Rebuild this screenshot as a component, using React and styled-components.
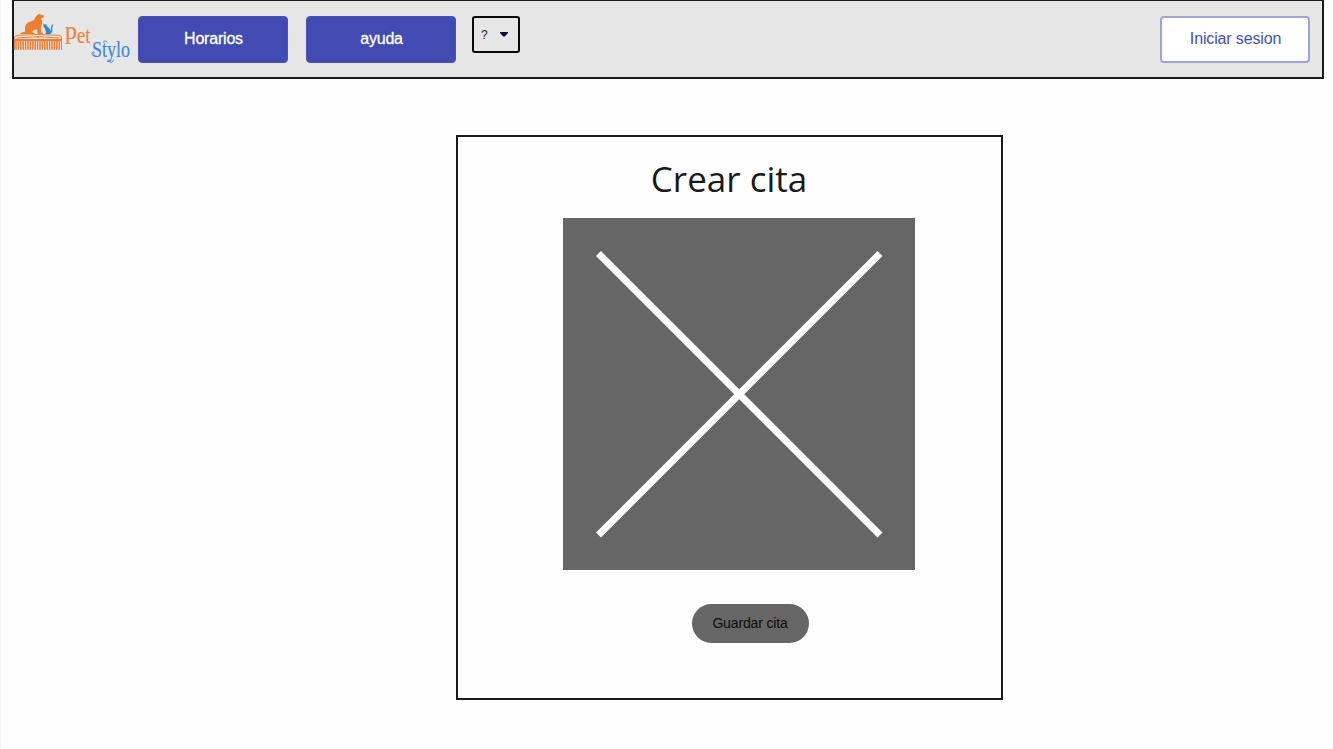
import React from 'react';
import styled, { createGlobalStyle } from 'styled-components';

const GlobalStyle = createGlobalStyle`
  *, *::before, *::after { box-sizing: border-box; }
  body {
    margin: 0;
    background: #fefefe;
    font-family: "Liberation Sans", Arial, sans-serif;
  }
  button { font-family: inherit; margin: 0; padding: 0; cursor: pointer; }
`;

const Page = styled.div`
  display: flex;
  flex-direction: column;
  height: 749px;
  padding: 0 9px 0 11px;
  border-left: 1px solid #f4f4f4;
`;

const Header = styled.header`
  display: flex;
  align-items: flex-start;
  flex: none;
  height: 79px;
  padding: 15px 12px 0 0;
  background: #e6e6e6;
  border: 2px solid #1a1a1a;
  border-top-width: 1px;
`;

const Logo = styled.svg`
  flex: none;
  width: 120px;
  height: 64px;
  margin: -10px 4px 0 0;
  overflow: visible;
`;

const Nav = styled.nav`
  display: flex;
  gap: 18px;
  margin-right: 16px;
`;

const Button = styled.button`
  width: 150px;
  height: 47px;
  padding: 0 0 1px 1px;
  border-radius: 4px;
  font-size: 16px;
  line-height: 20px;
  letter-spacing: ${(p) => (p.$outlined ? '-0.15px' : '-0.2px')};
  color: ${(p) => (p.$outlined ? '#4550ae' : '#fff')};
  background: ${(p) => (p.$outlined ? '#fff' : '#424bb2')};
  border: ${(p) => (p.$outlined ? '2px solid #9fa5d8' : '1px solid #4952b6')};
  -webkit-text-stroke: ${(p) => (p.$outlined ? '0' : '0.3px #fff')};
`;

const LanguageSelect = styled.button`
  display: flex;
  align-items: center;
  justify-content: space-between;
  width: 48px;
  height: 37px;
  padding: 0 10px 0 7px;
  border: 2px solid #0a0a0a;
  border-radius: 3px;
  background: #e6e6e6;
  color: #222;
  font-size: 12px;
`;

const Account = styled.div`
  margin-left: auto;
`;

const Card = styled.main`
  display: flex;
  flex-direction: column;
  align-items: center;
  flex: none;
  width: 547px;
  height: 565px;
  margin: 56px 0 0 444px;
  padding-top: 17px;
  background: #fefefe;
  border: 2px solid #1a1a1a;
`;

const Title = styled.h1`
  margin: 0 1px 0 0;
  font: 400 35px/50px "Open Sans", "Noto Sans", sans-serif;
  color: #1a1a1a;
`;

const Placeholder = styled.svg`
  flex: none;
  width: 352px;
  height: 352px;
  margin: 14px 0 0 19px;
  background: #666;
`;

const SaveButton = styled.button`
  width: 117px;
  height: 39px;
  margin: 33.5px 0 0 41px;
  border: 0;
  border-radius: 20px;
  background: #666;
  color: #0c0c0c;
  font-size: 14px;
  letter-spacing: -0.15px;
`;

const teeth = Array.from({ length: 19 }, (_, i) => 16 + i * 2.4);

function PetStyloLogo() {
  return (
    <Logo viewBox="14 6 120 64" aria-label="Pet Stylo">
      <path
        fill="#ed7d31"
        d="M20 33.6 L22.5 32.2 L25.3 31.4 C24.2 28 25 24.6 28 22.6 L33.5 20.3 C35.2 18.8 35.2 16.3 37.4 15 L39.3 13.8 L41 14.8 L44 15.6 L43.6 17.6 L41 18.6 C42.6 21 42.6 23.6 41.2 26.5 L41 32 L43 33 V34 H37.6 L37 29.5 L34 30 L32 32 L34.5 33 V34 H20 Z"
      />
      <path
        fill="#2f86d2"
        d="M43.4 23.2 L44.8 24.7 L46.3 24 L47 26.6 C49.3 27.8 50.3 29.6 50.5 31.2 C51.8 29.5 49.9 27.4 51.8 25.2 L53.5 23.6 C53.1 26 52 26.6 52.3 28.6 C52.7 31.5 52 33.2 50 34.2 H45.2 L46 32.5 L45 28.4 L43.3 26.6 Z"
      />
      <path
        fill="none"
        stroke="#ed7d31"
        strokeWidth="1"
        d="M14.4 50 V38 C14.4 35.6 17 35.4 20 35.2 Q38 33.8 56 35.2 C59.5 35.4 61.5 35.6 61.5 38 V50 M16.5 38 Q38 35.4 59.5 38"
      />
      <path fill="#ed7d31" d="M15 39 H61 V41 H15 Z" />
      <circle cx="38" cy="37" r="1.1" fill="#ed7d31" />
      <path
        stroke="#ed7d31"
        strokeWidth="1.5"
        d={teeth.map((x) => `M${x} 40.5 V49.8`).join(' ')}
      />
      <g fontFamily='"Liberation Serif", serif' strokeWidth="0.2">
        <g fill="#ed8340" stroke="#ed8340">
          <text x="65" y="38.5" fontSize="25" textLength="12" lengthAdjust="spacingAndGlyphs">p</text>
          <text x="77" y="43" fontSize="24" textLength="13.5" lengthAdjust="spacingAndGlyphs">et</text>
        </g>
        <text x="92" y="56.5" fontSize="24" fill="#3b8ad6" stroke="#3b8ad6" textLength="38" lengthAdjust="spacingAndGlyphs">Stylo</text>
      </g>
      <path
        fill="none"
        stroke="#3b8ad6"
        strokeWidth="1"
        strokeLinecap="round"
        d="M93 55.5 C90.5 53.5 92.5 50.5 94.5 52.5 M104 43 C103 40.5 105.5 40 107 42 M109.5 60 C108 63.2 112.5 63.5 113.5 60"
      />
    </Logo>
  );
}

export default function App() {
  return (
    <>
      <GlobalStyle />
      <Page>
        <Header>
          <PetStyloLogo />
          <Nav>
            <Button>Horarios</Button>
            <Button>ayuda</Button>
          </Nav>
          <LanguageSelect>
            <span>?</span>
            <svg width="8" height="5" viewBox="0 0 8 5">
              <path d="M0 0H8V1L4.7 4.5H3.3L0 1Z" fill="#080044" />
            </svg>
          </LanguageSelect>
          <Account>
            <Button $outlined>Iniciar sesion</Button>
          </Account>
        </Header>
        <Card>
          <Title>Crear cita</Title>
          <Placeholder viewBox="0 0 352 352">
            <path d="M35.5 35.5 L317 317 M317 35.5 L35.5 317" stroke="#fff" strokeWidth="7" />
          </Placeholder>
          <SaveButton>Guardar cita</SaveButton>
        </Card>
      </Page>
    </>
  );
}
